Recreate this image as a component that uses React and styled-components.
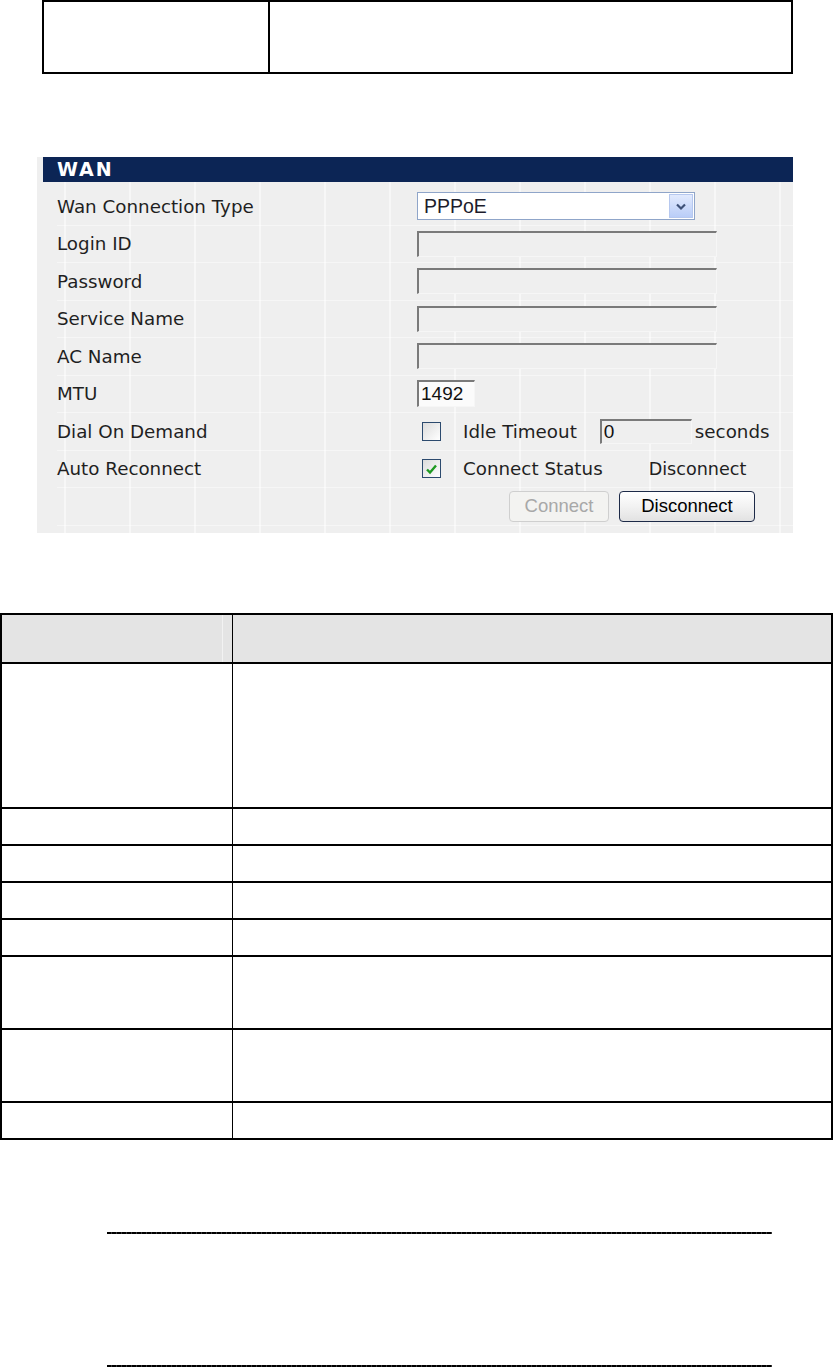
import React from "react";
import styled, { createGlobalStyle } from "styled-components";

const Global = createGlobalStyle`
  html, body { margin: 0; padding: 0; background: #ffffff; }
  body { font-family: "DejaVu Sans", Verdana, sans-serif; color: #222; }
  * { box-sizing: border-box; }
`;

const Page = styled.div`
  width: 833px;
  display: flex;
  flex-direction: column;
`;

/* ---------- top table (tail of previous table) ---------- */
const TopTable = styled.div`
  margin-left: 42px;
  width: 751px;
  height: 74px;
  border: 2px solid #000;
  display: grid;
  grid-template-columns: 226px 1fr;
`;
const TopCell = styled.div`
  border-right: ${(p) => (p.$last ? "none" : "2px solid #000")};
`;

/* ---------- WAN panel ---------- */
const Panel = styled.div`
  margin-top: 83px;
  margin-left: 37px;
  width: 756px;
  height: 376px;
  background-color: #efefef;
  background-image: repeating-linear-gradient(
    90deg,
    transparent 0 27px,
    rgba(255, 255, 255, 0.5) 27px 29px,
    transparent 29px 65px
  );
  display: flex;
  flex-direction: column;
`;
const PanelHeader = styled.div`
  margin-left: 6px;
  height: 25px;
  background: #0c2555;
  color: #fff;
  font-family: "DejaVu Sans", Verdana, sans-serif;
  font-weight: bold;
  font-size: 19px;
  line-height: 25px;
  padding-left: 14px;
  letter-spacing: 2px;
`;
const FormBody = styled.div`
  padding: 6px 0 0 20px;
  display: flex;
  flex-direction: column;
`;
const FormRow = styled.div`
  height: 37.5px;
  display: grid;
  grid-template-columns: 360px 1fr;
  align-items: center;
  border-bottom: 1px solid rgba(255, 255, 255, 0.45);
`;
const Label = styled.div`
  font-size: 18.3px;
  color: #1f1f1f;
  white-space: nowrap;
`;
const Controls = styled.div`
  display: flex;
  align-items: center;
`;

const SelectBox = styled.div`
  width: 278px;
  height: 28px;
  border: 1px solid #8fa5c9;
  background: #fff;
  display: flex;
  align-items: center;
  justify-content: space-between;
  padding: 1px;
`;
const SelectText = styled.span`
  font-family: "Liberation Sans", Arial, sans-serif;
  font-size: 19.5px;
  color: #1c1c2c;
  padding-left: 5px;
`;
const SelectArrow = styled.span`
  width: 24px;
  height: 24px;
  border: 1px solid #b6c8ef;
  background: linear-gradient(#e2eafd, #b9cdf8);
  display: flex;
  align-items: center;
  justify-content: center;
`;

const TextInput = styled.div`
  width: ${(p) => p.$w}px;
  height: ${(p) => p.$h || 26}px;
  border-top: 2px solid #7a7a7a;
  border-left: 2px solid #7a7a7a;
  border-right: 1px solid #f6f6f6;
  border-bottom: 1px solid #f6f6f6;
  background: ${(p) => p.$bg || "#efefef"};
  font-family: "Liberation Sans", Arial, sans-serif;
  font-size: 19px;
  color: #111;
  line-height: ${(p) => (p.$h || 26) - 4}px;
  padding-left: 2px;
`;

const Check = styled.span`
  width: 19px;
  height: 19px;
  border: 1px solid #2c4a6e;
  background: linear-gradient(135deg, #dcdcdc, #ffffff);
  display: inline-flex;
  align-items: center;
  justify-content: center;
  margin-left: 5px;
  margin-right: 22px;
  flex: none;
`;
const InlineText = styled.span`
  font-size: ${(p) => p.$fs || 18.3}px;
  color: #1f1f1f;
  white-space: nowrap;
  margin-right: ${(p) => p.$mr || 0}px;
  margin-left: ${(p) => p.$ml || 0}px;
`;

const ButtonRow = styled.div`
  display: flex;
  align-items: center;
  gap: 10px;
  padding-left: 92px;
`;
const Button = styled.button`
  height: 31px;
  width: ${(p) => p.$w}px;
  border-radius: 4px;
  font-family: "Liberation Sans", Arial, sans-serif;
  font-size: 18.5px;
  padding: 0;
  color: ${(p) => (p.disabled ? "#a8a8a8" : "#000")};
  border: 1px solid ${(p) => (p.disabled ? "#cfcfcf" : "#1d2a48")};
  background: ${(p) =>
    p.disabled ? "#f3f3f1" : "linear-gradient(#ffffff, #f2f2f2 50%, #e2e2e2)"};
`;

/* ---------- description table ---------- */
const DescTable = styled.div`
  margin-top: 80px;
  width: 833px;
  border-top: 2px solid #000;
  border-left: 2px solid #000;
  border-right: 2px solid #000;
  display: flex;
  flex-direction: column;
`;
const DescRow = styled.div`
  height: ${(p) => p.$h}px;
  display: grid;
  grid-template-columns: 231px 1fr;
  border-bottom: 2px solid #000;
  background: ${(p) =>
    p.$head
      ? "linear-gradient(90deg, #e4e4e4 0 220px, #f2f2f2 220px 221px, #e4e4e4 221px)"
      : "#fff"};
`;
const DescCell = styled.div`
  border-right: ${(p) => (p.$first ? "1px solid #000" : "none")};
`;

/* ---------- note box ---------- */
const Note = styled.div`
  margin-top: 92px;
  margin-left: 107px;
  width: 665px;
  height: 135px;
  display: flex;
  flex-direction: column;
  justify-content: space-between;
`;
const DashLine = styled.div`
  height: 2px;
  background: repeating-linear-gradient(90deg, #000 0 4px, #3a3a3a 4px 5px);
`;

const Chevron = () => (
  <svg width="12" height="9" viewBox="0 0 12 9">
    <path d="M2 2.5 L6 6.5 L10 2.5" fill="none" stroke="#3e5177" strokeWidth="2.2" />
  </svg>
);
const Tick = () => (
  <svg width="13" height="12" viewBox="0 0 13 12">
    <path d="M2 6.5 L5 9.5 L11 2.5" fill="none" stroke="#1f9a22" strokeWidth="2.4" />
  </svg>
);

const descRows = [49, 145, 37, 37, 37, 37, 73, 73, 37];

export default function App() {
  return (
    <Page>
      <Global />
      <TopTable>
        <TopCell />
        <TopCell $last />
      </TopTable>

      <Panel>
        <PanelHeader>WAN</PanelHeader>
        <FormBody>
          <FormRow>
            <Label>Wan Connection Type</Label>
            <Controls>
              <SelectBox>
                <SelectText>PPPoE</SelectText>
                <SelectArrow>
                  <Chevron />
                </SelectArrow>
              </SelectBox>
            </Controls>
          </FormRow>
          <FormRow>
            <Label>Login ID</Label>
            <Controls>
              <TextInput $w={300} />
            </Controls>
          </FormRow>
          <FormRow>
            <Label>Password</Label>
            <Controls>
              <TextInput $w={300} />
            </Controls>
          </FormRow>
          <FormRow>
            <Label>Service Name</Label>
            <Controls>
              <TextInput $w={300} />
            </Controls>
          </FormRow>
          <FormRow>
            <Label>AC Name</Label>
            <Controls>
              <TextInput $w={300} />
            </Controls>
          </FormRow>
          <FormRow>
            <Label>MTU</Label>
            <Controls>
              <TextInput $w={58} $h={27} $bg="#fbfbfb">1492</TextInput>
            </Controls>
          </FormRow>
          <FormRow>
            <Label>Dial On Demand</Label>
            <Controls>
              <Check />
              <InlineText $mr={23}>Idle Timeout</InlineText>
              <TextInput $w={92} $h={25}>0</TextInput>
              <InlineText $ml={3}>seconds</InlineText>
            </Controls>
          </FormRow>
          <FormRow>
            <Label>Auto Reconnect</Label>
            <Controls>
              <Check>
                <Tick />
              </Check>
              <InlineText $mr={46}>Connect Status</InlineText>
              <InlineText $fs={17.6}>Disconnect</InlineText>
            </Controls>
          </FormRow>
          <FormRow>
            <Label />
            <ButtonRow>
              <Button $w={100} disabled>
                Connect
              </Button>
              <Button $w={136}>Disconnect</Button>
            </ButtonRow>
          </FormRow>
        </FormBody>
      </Panel>

      <DescTable>
        {descRows.map((h, i) => (
          <DescRow key={i} $h={h} $head={i === 0}>
            <DescCell $first />
            <DescCell />
          </DescRow>
        ))}
      </DescTable>

      <Note>
        <DashLine />
        <DashLine />
      </Note>
    </Page>
  );
}
